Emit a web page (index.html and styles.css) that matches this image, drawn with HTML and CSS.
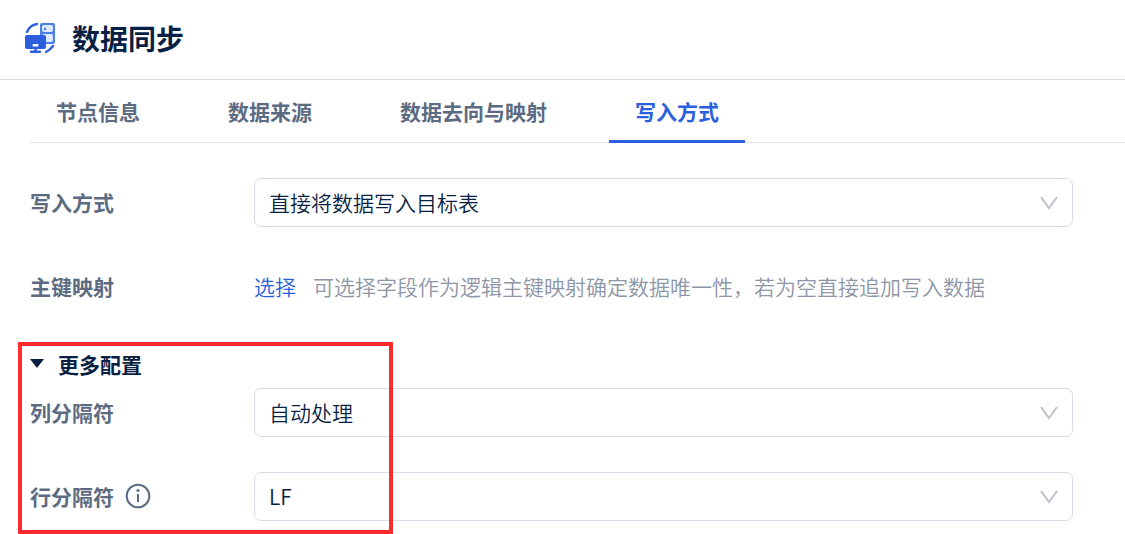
FILE: index.html
```html
<!DOCTYPE html>
<html lang="zh-CN">
<head>
  <meta charset="UTF-8">
  <title>数据同步</title>
  <link rel="stylesheet" href="styles.css">
</head>
<body>
  <header class="header">
    <svg class="logo" viewBox="0 0 32 32" aria-hidden="true">
      <rect x="16" y="1" width="15" height="21" rx="2" fill="#4a80ec"/>
      <rect x="18" y="3" width="11" height="7" rx="2" fill="#dfe9fd"/>
      <rect x="18" y="12" width="11" height="8" rx="2" fill="#dfe9fd"/>
      <circle cx="21" cy="7" r="1.3" fill="#4a80ec"/>
      <rect x="1" y="13" width="21" height="14" rx="2" fill="#2b5fdd"/>
      <rect x="8.500" y="22" width="6" height="2.500" rx="1" fill="#fff"/>
      <path d="M11.500 27v2.500M7 29.800h9" stroke="#2b5fdd" stroke-width="2.400" stroke-linecap="round"/>
      <path d="M3 10Q6 3 13 2M22 30Q26 28 29 24" fill="none" stroke="#2b5fdd" stroke-width="2.400" stroke-linecap="round"/>
    </svg>
    <h1>数据同步</h1>
  </header>

  <nav class="tabs">
    <button type="button" class="tab">节点信息</button>
    <button type="button" class="tab">数据来源</button>
    <button type="button" class="tab">数据去向与映射</button>
    <button type="button" class="tab active">写入方式</button>
  </nav>

  <main class="form">
    <div class="row">
      <label class="label" for="writeMode">写入方式</label>
      <div class="select-box">
        <select id="writeMode">
          <option>直接将数据写入目标表</option>
        </select>
        <svg class="arrow" viewBox="0 0 18 14" aria-hidden="true"><path d="M1 1l8 11 8-11"/></svg>
      </div>
    </div>
    <div class="row">
      <span class="label">主键映射</span>
      <a href="#" class="link">选择</a>
      <span class="hint">可选择字段作为逻辑主键映射确定数据唯一性，若为空直接追加写入数据</span>
    </div>

    <!-- More settings -->
    <section class="more">
      <button type="button" class="more-title">
        <svg class="caret" viewBox="0 0 14 10" aria-hidden="true"><path d="M0 0h14l-7 9z"/></svg>
        更多配置
      </button>
      <div class="row">
        <label class="label" for="colSep">列分隔符</label>
        <div class="select-box">
          <select id="colSep">
            <option>自动处理</option>
          </select>
          <svg class="arrow" viewBox="0 0 18 14" aria-hidden="true"><path d="M1 1l8 11 8-11"/></svg>
        </div>
      </div>
      <div class="row">
        <label class="label" for="rowSep">
          行分隔符
          <svg class="info" viewBox="0 0 26 26" aria-hidden="true">
            <circle cx="13" cy="13" r="11.300"/>
            <path d="M13 11v8"/>
            <circle class="dot" cx="13" cy="7.500" r="1.600"/>
          </svg>
        </label>
        <div class="select-box">
          <select id="rowSep">
            <option>LF</option>
          </select>
          <svg class="arrow" viewBox="0 0 18 14" aria-hidden="true"><path d="M1 1l8 11 8-11"/></svg>
        </div>
      </div>
    </section>
  </main>
</body>
</html>
```
FILE: styles.css
```css
* {
  box-sizing: border-box;
}
body {
  margin: 0;
  background: #fff;
  color: #0a1f44;
  font-family: "Noto Sans CJK SC", sans-serif;
  font-size: 21px;
  font-weight: 350;
  line-height: 32px;
}
button, select {
  font: inherit;
  color: inherit;
  background: none;
  border: none;
  padding: 0;
}
.header {
  display: flex;
  align-items: center;
  gap: 16px;
  height: 80px;
  padding: 0 24px 4px;
  border-bottom: 1px solid #d8dbe2;
}
.header h1 {
  margin: 0;
  font-size: 28px;
  line-height: 40px;
}
.logo {
  width: 32px;
  height: 32px;
}
.tabs {
  display: flex;
  gap: 36px;
  margin-left: 30px;
  border-bottom: 1px solid #e3e6f0;
}
.tab {
  padding: 15px 26px 13px;
  margin-bottom: -1px;
  border-bottom: 3px solid transparent;
  color: #5d6b82;
  font-weight: 700;
}
.tab.active {
  color: #2b5fdd;
  border-bottom-color: #2b5fdd;
}
.form {
  padding: 35px 52px 13px 30px;
}
.row {
  display: flex;
  align-items: center;
  min-height: 49px;
  margin-bottom: 35px;
}
.label {
  display: flex;
  align-items: center;
  flex: 0 0 224px;
  color: #5d6b82;
  font-weight: 700;
}
.label, .link, .hint {
  padding-bottom: 2px;
}
.select-box {
  display: flex;
  align-items: center;
  position: relative;
  flex: 1;
}
.select-box select {
  appearance: none;
  width: 100%;
  height: 49px;
  padding: 0 48px 2px 14px;
  border: 1px solid #d9dce8;
  border-radius: 7px;
}
.arrow {
  position: absolute;
  right: 15px;
  width: 18px;
  height: 14px;
  fill: none;
  stroke: #bcc1ca;
  stroke-width: 2;
  pointer-events: none;
}
.link {
  color: #2b5fdd;
  text-decoration: none;
}
.hint {
  margin-left: 17px;
  color: #8d96a6;
}
.more {
  position: relative;
  padding-top: 2px;
}
.more .row:last-child {
  margin-bottom: 0;
}
.more-title {
  display: flex;
  align-items: center;
  gap: 14px;
  margin-bottom: 8px;
  font-weight: 700;
}
.caret {
  width: 14px;
  height: 10px;
  fill: #0a1f44;
}
.info {
  width: 26px;
  height: 26px;
  margin-left: 11px;
  fill: none;
  stroke: #5d6b82;
  stroke-width: 2;
}
.info .dot {
  fill: #5d6b82;
  stroke: none;
}
/* red frame over the settings */
.more::after {
  content: "";
  box-sizing: border-box;
  position: absolute;
  top: -4px;
  bottom: -13px;
  left: -12px;
  width: 375px;
  border: 4px solid #fd2a30;
  pointer-events: none;
}
```
